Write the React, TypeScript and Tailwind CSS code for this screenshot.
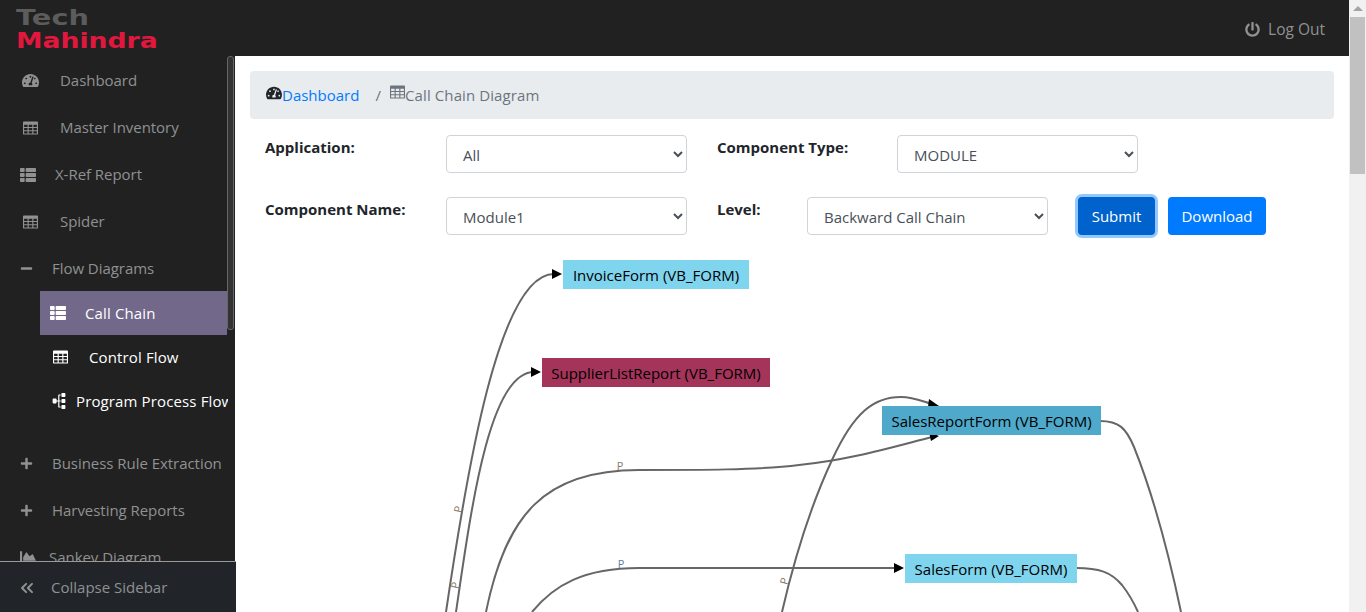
import { ReactNode } from 'react';
import { ChevronsLeft } from 'lucide-react';
import {
  FaChartArea,
  FaMinus,
  FaPlus,
  FaPowerOff,
  FaSitemap,
  FaTachometerAlt,
  FaThList,
} from 'react-icons/fa';

const font = { fontFamily: '"Open Sans", sans-serif' };

// the older table glyph: header bar with three columns of three cells
const TableIcon = ({ className }: { className: string }) => (
  <svg className={className} viewBox="0 0 16 14" fill="currentColor" fillRule="evenodd">
    <path d="M1 0h14a1 1 0 0 1 1 1v12a1 1 0 0 1-1 1H1a1 1 0 0 1-1-1V1a1 1 0 0 1 1-1zM1.2 3.6v2.3h3.7V3.6zM6.1 3.6v2.3h3.8V3.6zM11.1 3.6v2.3h3.7V3.6zM1.2 7v2.3h3.7V7zM6.1 7v2.3h3.8V7zM11.1 7v2.3h3.7V7zM1.2 10.4v2.4h3.7v-2.4zM6.1 10.4v2.4h3.8v-2.4zM11.1 10.4v2.4h3.7v-2.4z" />
  </svg>
);

interface NavRowProps {
  icon: ReactNode;
  label: string;
  iconBox: string;
}

const NavRow = ({ icon, label, iconBox }: NavRowProps) => (
  <div className="flex h-[47px] items-center whitespace-nowrap text-[15px] tracking-[-0.04px] text-[#8f9192]">
    <span className={`flex shrink-0 items-center ${iconBox}`}>{icon}</span>
    {label}
  </div>
);

const SubRow = ({ icon, label, iconBox, active }: NavRowProps & { active?: boolean }) => (
  <div
    className={`flex h-[44px] items-center whitespace-nowrap text-[15px] tracking-[0.13px] text-white ${
      active ? 'bg-[#72688a]' : ''
    }`}
  >
    <span className={`flex shrink-0 items-center ${iconBox}`}>{icon}</span>
    {label}
  </div>
);

const Sidebar = () => (
  <aside className="relative h-full w-[235px] shrink-0 overflow-hidden bg-[#212121]">
    <div className="w-[228px] overflow-hidden pt-px">
      <NavRow iconBox="w-[60px] pl-[22px]" icon={<FaTachometerAlt className="h-[17px] w-[17px]" />} label="Dashboard" />
      <NavRow iconBox="w-[60px] pl-[23px]" icon={<TableIcon className="h-[14px] w-[15px]" />} label="Master Inventory" />
      <NavRow iconBox="w-[55px] pl-[20px]" icon={<FaThList className="h-[16px] w-[16px]" />} label="X-Ref Report" />
      <NavRow iconBox="w-[60px] pl-[23px]" icon={<TableIcon className="h-[14px] w-[15px]" />} label="Spider" />
      <NavRow iconBox="w-[52px] pl-[20px]" icon={<FaMinus className="h-[13px] w-[13px]" />} label="Flow Diagrams" />
      <div className="-mt-px mb-[17px] ml-[40px] w-[187px]">
        <SubRow active iconBox="w-[45px] pl-[10px]" icon={<FaThList className="h-[16px] w-[16px]" />} label="Call Chain" />
        <SubRow iconBox="w-[49px] pl-[13px]" icon={<TableIcon className="h-[14px] w-[15px]" />} label="Control Flow" />
        <SubRow iconBox="w-[36px] pl-[11px]" icon={<FaSitemap className="h-[16px] w-[16px] -rotate-90" />} label="Program Process Flow" />
      </div>
      <NavRow iconBox="w-[52px] pl-[20px]" icon={<FaPlus className="h-[13px] w-[13px]" />} label="Business Rule Extraction" />
      <NavRow iconBox="w-[52px] pl-[20px]" icon={<FaPlus className="h-[13px] w-[13px]" />} label="Harvesting Reports" />
      <NavRow iconBox="w-[49px] pl-[20px]" icon={<FaChartArea className="h-[17px] w-[17px]" />} label="Sankey Diagram" />
    </div>
    <div className="absolute right-px top-0 h-[274px] w-[7px] rounded-[3px] border border-[#666] bg-[#333]" />
  </aside>
);

const CollapseBar = () => (
  <div className="absolute bottom-0 left-0 flex h-[51px] w-[236px] items-center border-t border-[#9a9a9a] bg-[#212529] pl-[17px] pt-px text-[15px] text-[#8f9192]">
    <ChevronsLeft className="mr-[14px] h-5 w-5" strokeWidth={2.4} />
    Collapse Sidebar
  </div>
);

const Field = ({ value }: { value: string }) => (
  <select
    defaultValue={value}
    className="h-[38px] w-[241px] rounded border border-[#ced4da] bg-white px-3 pt-px text-[15px] text-[#495057]"
  >
    <option>{value}</option>
  </select>
);

const nodes = [
  { label: 'InvoiceForm (VB_FORM)', box: 'left-[327px] top-[10px] w-[186px] bg-[#7fd4ee]' },
  { label: 'SupplierListReport (VB_FORM)', box: 'left-[306px] top-[108px] w-[228px] bg-[#a5345a]' },
  { label: 'SalesReportForm (VB_FORM)', box: 'left-[646px] top-[156px] w-[219px] bg-[#4fa9cb]' },
  { label: 'SalesForm (VB_FORM)', box: 'left-[669px] top-[304px] w-[172px] bg-[#7fd4ee]' },
];

const edges = [
  'M447 612C468 470 500 274 555 274',
  'M457 612C472 510 490 372 535 372',
  'M487 612C507 515 545 470 640 470C700 470 760 470 800 465C850 460 890 448 933 437',
  'M533 612C555 585 585 568 640 568L897 568',
  'M783 612C795 560 812 505 833 460C855 412 875 397 902 397C915 397 925 402 933 404',
  'M1101 421C1120 421 1127 428 1135 447C1155 497 1170 555 1182 612',
  'M1077 568C1100 568 1112 572 1123 585C1130 594 1135 603 1139 612',
];

const arrows = ['553,269 563,274 553,279', '532,367 542,372 532,377', '930,432 940,436 932,441', '895,563 905,568 895,573', '930,399 940,406 929,407'];

const labels = [
  { x: 463, y: 510, r: -80, tint: '#8a7a66' },
  { x: 460, y: 586, r: -80, tint: '#8a7a66' },
  { x: 621, y: 470, r: 0, tint: '#8a7a66' },
  { x: 622, y: 568, r: 0, tint: '#5f7f9a' },
  { x: 789, y: 582, r: -75, tint: '#8a7a66' },
];

const Diagram = () => (
  <div className="relative min-h-0 flex-1 overflow-hidden">
    {/* edges are plotted in page coordinates, so shift by the canvas origin */}
    <svg className="absolute left-0 top-0" width="1113" height="362" viewBox="236 250 1113 362">
      {edges.map((d) => (
        <path key={d} d={d} fill="none" stroke="#666" strokeWidth="2" />
      ))}
      {arrows.map((p) => (
        <polygon key={p} points={p} fill="#000" />
      ))}
      {labels.map((l) => (
        <text
          key={l.x}
          x={l.x}
          y={l.y}
          fontSize="11"
          fill={l.tint}
          textAnchor="middle"
          transform={l.r ? `rotate(${l.r} ${l.x} ${l.y})` : undefined}
        >
          P
        </text>
      ))}
    </svg>
    {nodes.map((n) => (
      <div key={n.label} className={`absolute ml-px flex h-[29px] items-center justify-center whitespace-nowrap pt-0.5 text-[15px] text-black ${n.box}`}>
        {n.label}
      </div>
    ))}
  </div>
);

export default function App() {
  return (
    <div className="flex h-[612px] w-[1366px] overflow-hidden" style={font}>
      <div className="relative flex min-w-0 flex-1 flex-col">
        <header className="flex h-14 shrink-0 items-start bg-[#212121] pl-4 pr-6">
          <div className="flex flex-col pt-[6px] font-bold leading-[23px]" style={{ fontFamily: '"DejaVu Sans", sans-serif' }}>
            <span className="origin-left scale-x-[1.31] text-[22px] text-[#5c5c5c]">Tech</span>
            <span className="origin-left scale-x-[1.21] text-[22px] text-[#e3173e]">Mahindra</span>
          </div>
          <div className="ml-auto flex items-center pt-[18px] text-[15.5px] text-[#8f9192]">
            <FaPowerOff className="mr-2 h-[15px] w-[15px]" />
            Log Out
          </div>
        </header>
        <div className="flex min-h-0 flex-1">
          <Sidebar />
          <main className="flex min-w-0 flex-1 flex-col bg-white">
            <div className="mx-[15px] mt-[15px] flex h-12 w-[1084px] shrink-0 items-center rounded bg-[#e9ecef] pl-4 text-[15px] tracking-[0.1px] text-[#6c757d]">
              <FaTachometerAlt className="-mt-1 h-4 w-4 text-[#212529]" />
              <span className="tracking-normal text-[#007bff]">Dashboard</span>
              <span className="ml-4 mr-[9px]">/</span>
              <TableIcon className="-mt-1.5 h-[14px] w-[15px]" />
              Call Chain Diagram
            </div>
            <div className="mt-4 flex h-[38px] shrink-0 pl-[30px]">
              <label className="w-[181px] pt-px text-[15px] font-bold text-[#212529]">Application:</label>
              <Field value="All" />
              <label className="ml-[30px] w-[180px] pt-px text-[15px] font-bold text-[#212529]">Component Type:</label>
              <Field value="MODULE" />
            </div>
            <div className="mt-6 flex h-[38px] shrink-0 pl-[30px]">
              <label className="w-[181px] pt-px text-[15px] font-bold text-[#212529]">Component Name:</label>
              <Field value="Module1" />
              <label className="ml-[30px] w-[90px] pt-px text-[15px] font-bold text-[#212529]">Level:</label>
              <Field value="Backward Call Chain" />
              <button className="ml-[30px] h-[38px] w-[77px] rounded bg-[#0062cc] text-[15px] text-white shadow-[0_0_0_3px_rgba(38,143,255,0.5)]">
                Submit
              </button>
              <button className="ml-[13px] h-[38px] w-[98px] rounded bg-[#007bff] text-[15px] text-white">Download</button>
            </div>
            <div className="h-[15px] shrink-0" />
            <Diagram />
          </main>
        </div>
        <CollapseBar />
      </div>
      <div className="flex w-[17px] shrink-0 flex-col items-center bg-[#f1f1f1]">
        <div className="mt-[6px] h-0 w-0 border-x-[5px] border-b-[5px] border-x-transparent border-b-[#a3a3a3]" />
        <div className="mt-[6px] h-[157px] w-[15px] bg-[#c1c1c1]" />
      </div>
    </div>
  );
}
